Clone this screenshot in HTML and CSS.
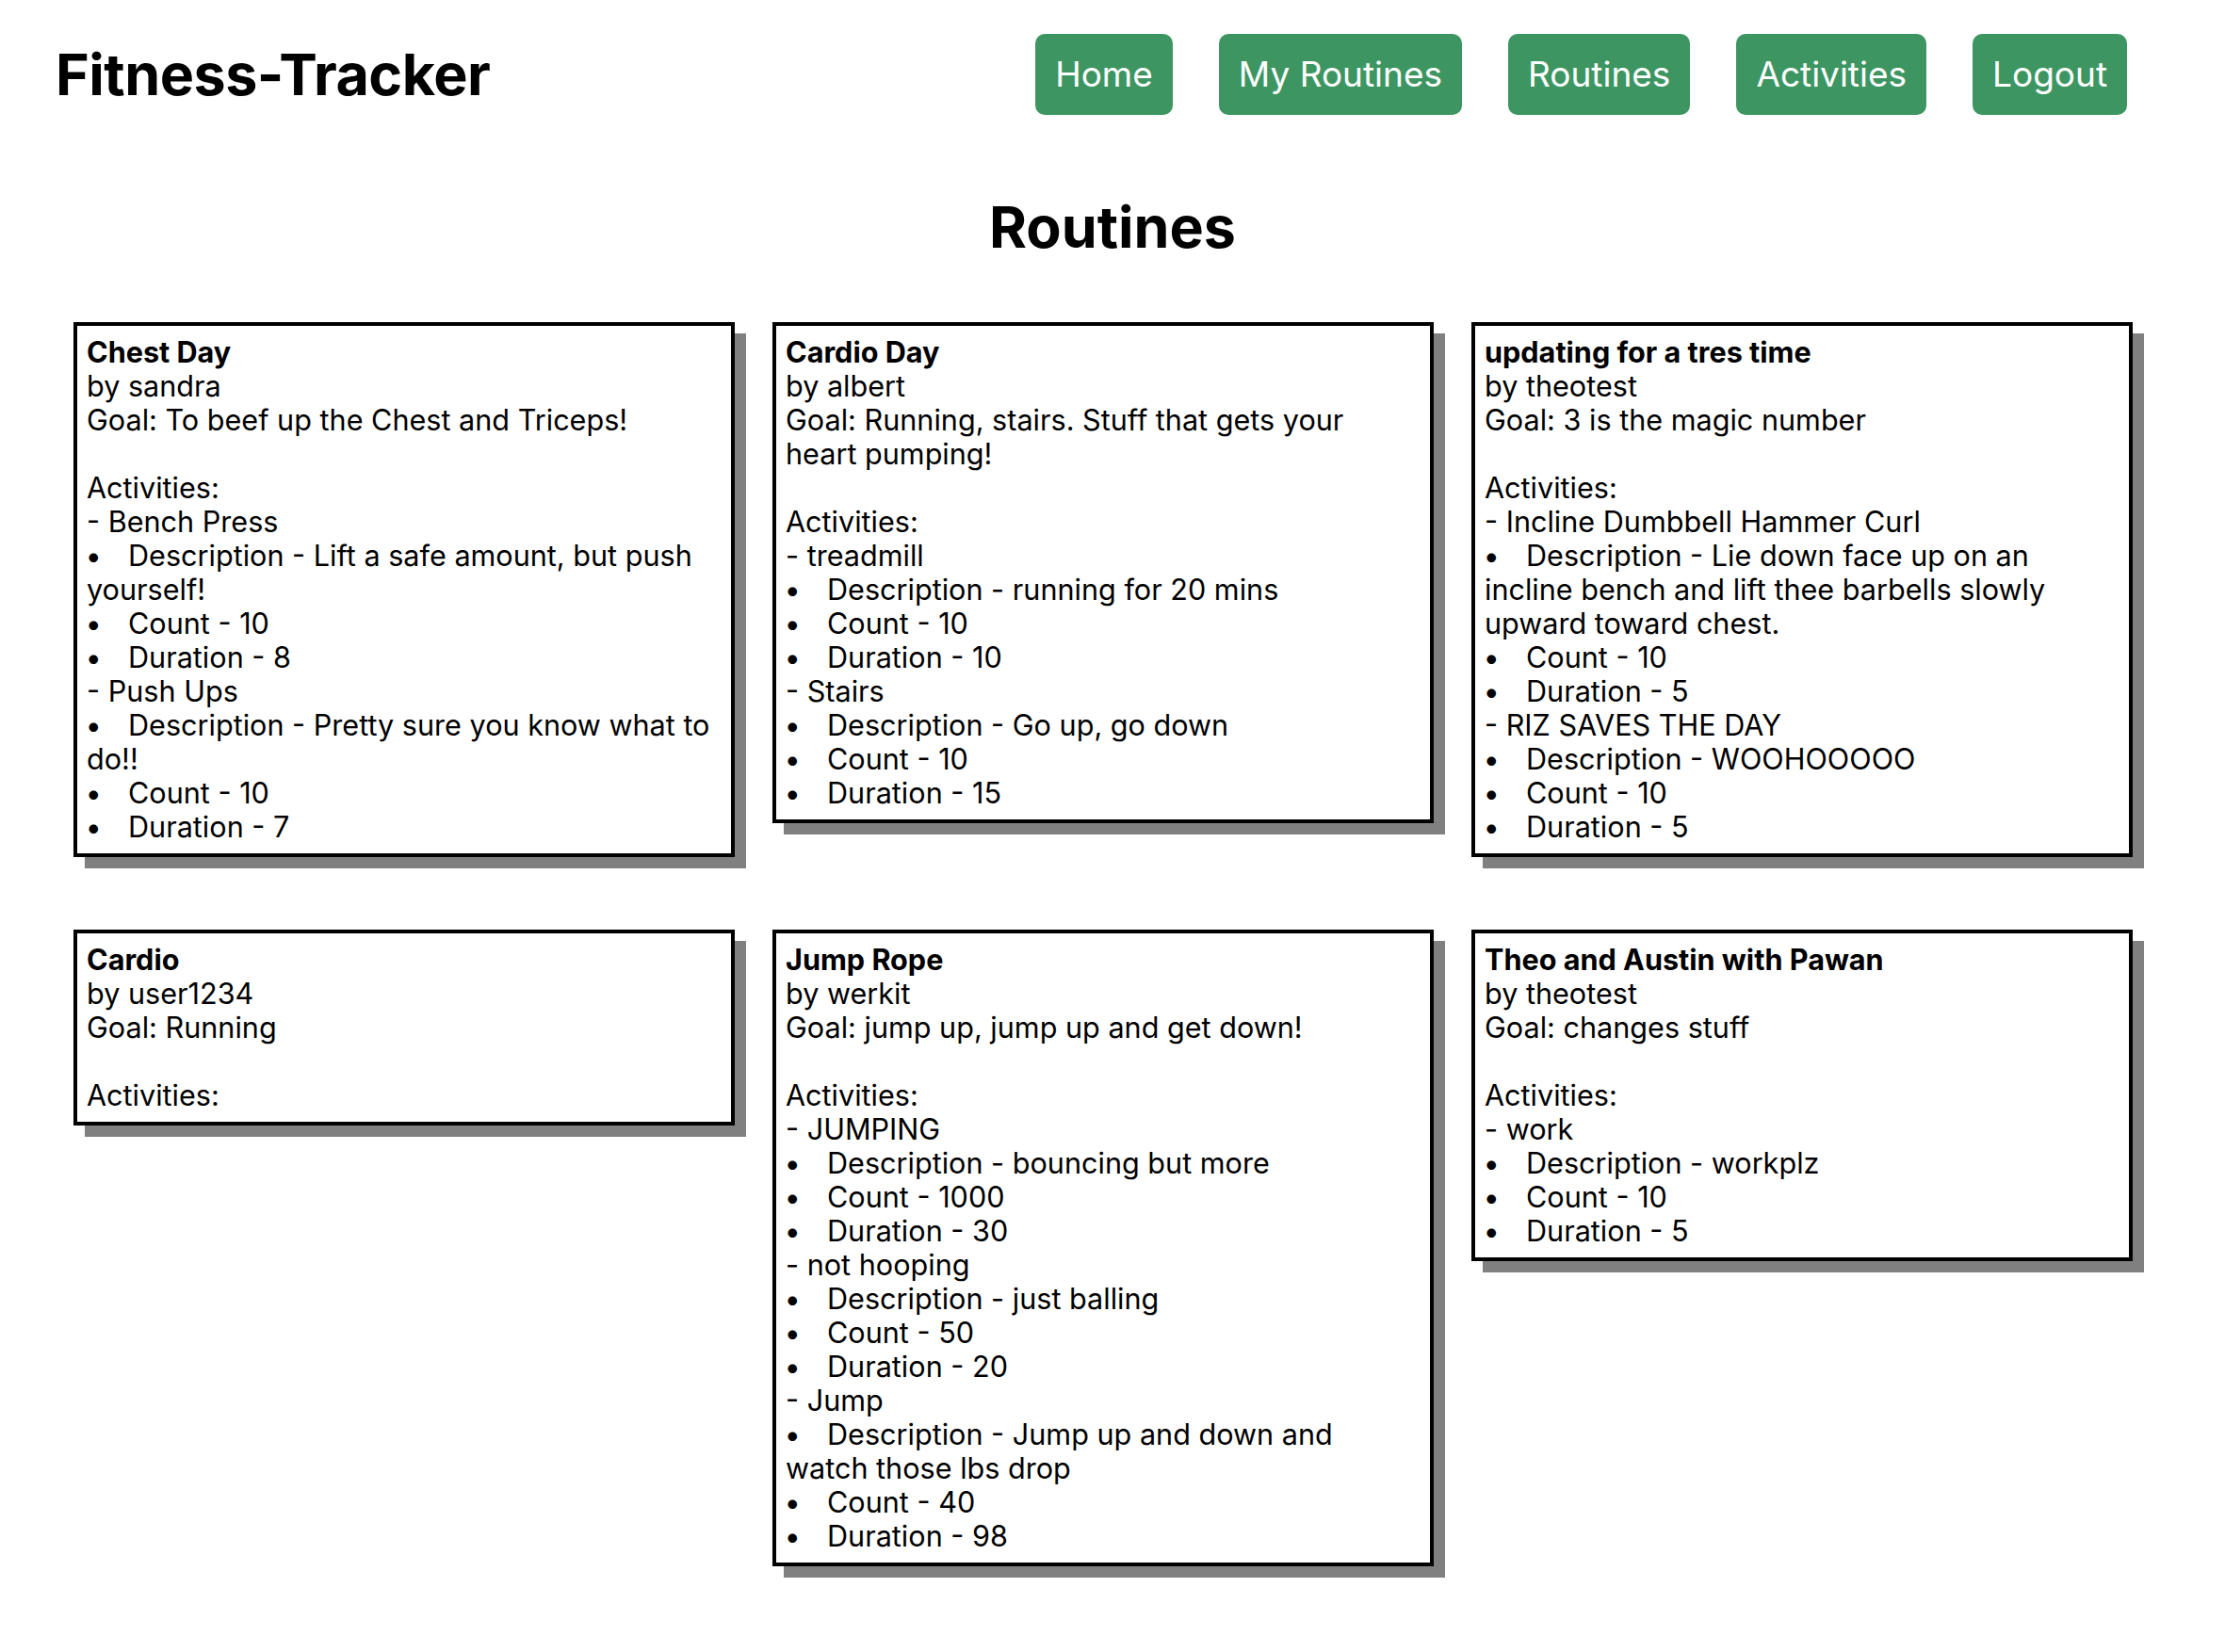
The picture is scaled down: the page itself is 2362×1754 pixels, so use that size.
FILE: index.html
```html
<!DOCTYPE html>
<html lang="en">
<head>
<meta charset="utf-8">
<title>Fitness-Tracker</title>
<link rel="stylesheet" href="styles.css">
</head>
<body>
<header class="topbar">
  <h1 class="brand">Fitness-Tracker</h1>
  <nav class="nav">
    <a class="nav-btn" href="#">Home</a>
    <a class="nav-btn" href="#">My Routines</a>
    <a class="nav-btn" href="#">Routines</a>
    <a class="nav-btn" href="#">Activities</a>
    <a class="nav-btn" href="#">Logout</a>
  </nav>
</header>
<main>
  <h2 class="page-title">Routines</h2>
  <section class="grid">
    <article class="card">
      <div class="name">Chest Day</div>
      <div>by sandra</div>
      <div>Goal: To beef up the Chest and Triceps!</div>
      <div class="blank"></div>
      <div>Activities:</div>
      <div>- Bench Press</div>
      <div><span class="dot">•</span>Description - Lift a safe amount, but push yourself!</div>
      <div><span class="dot">•</span>Count - 10</div>
      <div><span class="dot">•</span>Duration - 8</div>
      <div>- Push Ups</div>
      <div><span class="dot">•</span>Description - Pretty sure you know what to do!!</div>
      <div><span class="dot">•</span>Count - 10</div>
      <div><span class="dot">•</span>Duration - 7</div>
    </article>
    <article class="card">
      <div class="name">Cardio Day</div>
      <div>by albert</div>
      <div>Goal: Running, stairs. Stuff that gets your heart pumping!</div>
      <div class="blank"></div>
      <div>Activities:</div>
      <div>- treadmill</div>
      <div><span class="dot">•</span>Description - running for 20 mins</div>
      <div><span class="dot">•</span>Count - 10</div>
      <div><span class="dot">•</span>Duration - 10</div>
      <div>- Stairs</div>
      <div><span class="dot">•</span>Description - Go up, go down</div>
      <div><span class="dot">•</span>Count - 10</div>
      <div><span class="dot">•</span>Duration - 15</div>
    </article>
    <article class="card">
      <div class="name">updating for a tres time</div>
      <div>by theotest</div>
      <div>Goal: 3 is the magic number</div>
      <div class="blank"></div>
      <div>Activities:</div>
      <div>- Incline Dumbbell Hammer Curl</div>
      <div><span class="dot">•</span>Description - Lie down face up on an incline bench and lift thee barbells slowly upward toward chest.</div>
      <div><span class="dot">•</span>Count - 10</div>
      <div><span class="dot">•</span>Duration - 5</div>
      <div>- RIZ SAVES THE DAY</div>
      <div><span class="dot">•</span>Description - WOOHOOOOO</div>
      <div><span class="dot">•</span>Count - 10</div>
      <div><span class="dot">•</span>Duration - 5</div>
    </article>
    <article class="card">
      <div class="name">Cardio</div>
      <div>by user1234</div>
      <div>Goal: Running</div>
      <div class="blank"></div>
      <div>Activities:</div>
    </article>
    <article class="card">
      <div class="name">Jump Rope</div>
      <div>by werkit</div>
      <div>Goal: jump up, jump up and get down!</div>
      <div class="blank"></div>
      <div>Activities:</div>
      <div>- JUMPING</div>
      <div><span class="dot">•</span>Description - bouncing but more</div>
      <div><span class="dot">•</span>Count - 1000</div>
      <div><span class="dot">•</span>Duration - 30</div>
      <div>- not hooping</div>
      <div><span class="dot">•</span>Description - just balling</div>
      <div><span class="dot">•</span>Count - 50</div>
      <div><span class="dot">•</span>Duration - 20</div>
      <div>- Jump</div>
      <div><span class="dot">•</span>Description - Jump up and down and watch those lbs drop</div>
      <div><span class="dot">•</span>Count - 40</div>
      <div><span class="dot">•</span>Duration - 98</div>
    </article>
    <article class="card">
      <div class="name">Theo and Austin with Pawan</div>
      <div>by theotest</div>
      <div>Goal: changes stuff</div>
      <div class="blank"></div>
      <div>Activities:</div>
      <div>- work</div>
      <div><span class="dot">•</span>Description - workplz</div>
      <div><span class="dot">•</span>Count - 10</div>
      <div><span class="dot">•</span>Duration - 5</div>
    </article>
  </section>
</main>
</body>
</html>
```
FILE: styles.css
```css
* { box-sizing: border-box; }

body {
  margin: 0;
  background: #ffffff;
  color: #000000;
  font-family: Inter, "Noto Sans", "Liberation Sans", sans-serif;
}

.topbar {
  display: flex;
  align-items: center;
  justify-content: space-between;
  padding: 36px 104px 0 59px;
}

.brand {
  margin: 0;
  font-size: 61px;
  font-weight: 700;
  letter-spacing: -0.5px;
  line-height: 86px;
}

.nav {
  display: flex;
  gap: 49px;
}

.nav-btn {
  display: block;
  background: #3d9662;
  color: #ffffff;
  text-decoration: none;
  font-size: 37px;
  line-height: 46px;
  padding: 20px 21px;
  border-radius: 10px;
}

.page-title {
  margin: 83px 0 0;
  text-align: center;
  font-size: 61px;
  font-weight: 700;
  line-height: 72px;
}

.grid {
  display: grid;
  grid-template-columns: repeat(3, 702px);
  column-gap: 40px;
  row-gap: 77px;
  align-items: start;
  padding: 65px 0 80px 78px;
}

.card {
  border: 4px solid #000000;
  padding: 10px;
  background: #ffffff;
  box-shadow: 12px 12px 0 #808080;
  font-size: 30.6px;
  line-height: 36px;
}

.name {
  font-weight: 700;
}

.blank {
  height: 36px;
}

.dot {
  display: inline-block;
  width: 44px;
  font-weight: 700;
}
```
